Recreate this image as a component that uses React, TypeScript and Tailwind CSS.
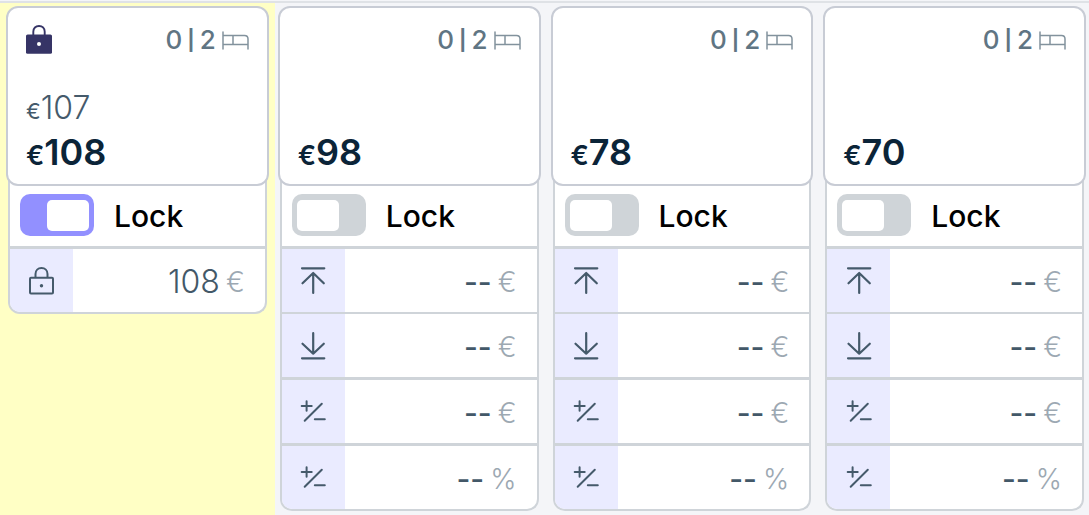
import { useId, useState } from "react";
import type { ReactNode } from "react";

type Night = {
  price: number;
  previousPrice?: number;
  locked: boolean;
  spacing: string;
};

const nights: Night[] = [
  { price: 108, previousPrice: 107, locked: true, spacing: "bg-[#ffffc5] px-1.5" },
  { price: 98, locked: false, spacing: "pl-[3px] pr-1.5" },
  { price: 78, locked: false, spacing: "pl-1 pr-1.5" },
  { price: 70, locked: false, spacing: "pl-1 pr-[3px]" },
];

function SolidLock() {
  return (
    <svg className="h-[30px] w-[26px]" viewBox="0 0 26 30" fill="none" aria-hidden="true">
      <path d="M7.300 11V6.800C7.300 3.200 9.700 1 13 1S18.700 3.200 18.700 6.800V11" stroke="#363466" strokeWidth="1.900" />
      <rect x="0" y="9.500" width="26" height="19.300" rx="1.600" fill="#363466" />
      <circle cx="13" cy="19" r="2" fill="#fff" />
    </svg>
  );
}

function OutlineLock() {
  return (
    <svg className="h-7 w-[26px]" viewBox="0 0 26 28" fill="none" stroke="#455a6b" strokeWidth="2" aria-hidden="true">
      <rect x="1" y="10.800" width="23" height="15.800" rx="1" />
      <path d="M6.500 10.800V7C6.500 3.300 9 1 12.500 1S18.500 3.300 18.500 7V10.800" />
      <circle cx="12.500" cy="18.700" r="1.700" fill="#455a6b" stroke="none" />
    </svg>
  );
}

function Bed() {
  return (
    <svg className="h-[19px] w-[27px]" viewBox="0 0 27 19" fill="none" stroke="#82929d" strokeWidth="1.500" strokeLinecap="round" aria-hidden="true">
      <path d="M1 1V18M1 4.500H22.500Q26 4.500 26 8V18M1 13.500H26M11 4.500V13.500" />
    </svg>
  );
}

function MaxIcon() {
  return (
    <svg className="size-7" viewBox="0 0 28 28" fill="none" stroke="#455a6b" strokeWidth="2.200" strokeLinecap="round" strokeLinejoin="round" aria-hidden="true">
      <path d="M3 1.300H25.300M14.200 6V26M3.500 16.300L14.200 6L24.800 16.300" />
    </svg>
  );
}

function MinIcon() {
  return (
    <svg className="size-7" viewBox="0 0 28 28" fill="none" stroke="#455a6b" strokeWidth="2.200" strokeLinecap="round" strokeLinejoin="round" aria-hidden="true">
      <path d="M3 26.300H25.300M14.200 1.200V21.700M3.500 11.700L14.200 21.700L24.800 11.700" />
    </svg>
  );
}

function PlusMinus() {
  return (
    <svg className="size-7" viewBox="0 0 28 28" fill="none" stroke="#455a6b" strokeWidth="2" strokeLinecap="round" aria-hidden="true">
      <path d="M2.700 8H12.700M7.600 3.200V12.800M5.700 22.800L22.800 5.700M15.800 21.300H25.800" />
    </svg>
  );
}

function Field({ label, icon, initial, unit }: { label: string; icon: ReactNode; initial: string; unit: string }) {
  const id = useId();
  const [value, setValue] = useState(initial);
  const weight = value === "--" ? "text-3xl font-medium" : "text-[32px] font-light";
  return (
    <div className="flex h-[63px] bg-white">
      <label htmlFor={id} aria-label={label} className="flex w-[63px] shrink-0 items-center justify-center bg-[#eaebff]">
        {icon}
      </label>
      <div className="flex min-w-0 flex-1 items-center gap-1.5 pt-0.5 pr-5">
        <input
          id={id}
          value={value}
          onChange={(e) => setValue(e.target.value)}
          className={`h-10 w-full min-w-0 flex-1 bg-transparent text-right text-[#435868] outline-none ${weight}`}
        />
        <span className="text-[28px] leading-10 font-light text-[#9ca8b2]">{unit}</span>
      </div>
    </div>
  );
}

function NightColumn({ night }: { night: Night }) {
  const id = useId();
  const [locked, setLocked] = useState(night.locked);
  return (
    <section className={`min-w-0 flex-1 pt-[3px] ${night.spacing}`}>
      <div className="relative z-10 flex h-[180px] flex-col justify-between rounded-xl border-2 border-[#c8ccd5] bg-white px-[18px] pt-4 pb-[11px]">
        <div className="flex h-8 items-center justify-between">
          {locked ? <SolidLock /> : <span />}
          <div className="flex items-center gap-1.5 text-[26px] leading-8 font-medium text-[#607583]">
            <span className="flex items-center gap-[5px]">
              <span>0</span>
              <span className="text-xl font-bold">|</span>
              <span>2</span>
            </span>
            <Bed />
          </div>
        </div>
        <div>
          {night.previousPrice !== undefined && (
            <p className="text-[32px] leading-[46px] font-light text-[#455a6b]">
              <span className="text-[22px] leading-none font-normal">€</span>
              {night.previousPrice}
            </p>
          )}
          <p className="text-4xl leading-[42px] font-semibold text-[#0b2438]">
            <span className="text-[27px] leading-none">€</span>
            {night.price}
          </p>
        </div>
      </div>
      <div className="mx-0.5 -mt-3 overflow-hidden rounded-b-xl border-2 border-t-0 border-[#cfd4d9] bg-[#cfd4d9]">
        <div className="flex h-[72px] items-center gap-5 bg-white pt-2.5 pl-2.5">
          <input
            id={id}
            type="checkbox"
            role="switch"
            checked={locked}
            onChange={(e) => setLocked(e.target.checked)}
            className="flex h-[42px] w-[74px] appearance-none items-center rounded-[10px] bg-[#cfd4d8] px-[5px] before:h-[31px] before:w-[42px] before:rounded-[5px] before:bg-white checked:justify-end checked:bg-[#9290ff]"
          />
          <label htmlFor={id} className="pt-0.5 text-3xl font-medium text-black">
            Lock
          </label>
        </div>
        <div className="pt-[3px]">
          {locked ? (
            <Field label="Locked price" icon={<OutlineLock />} initial={String(night.price)} unit="€" />
          ) : (
            <div className="flex flex-col gap-[3px]">
              <div className="flex flex-col gap-0.5">
                <Field label="Maximum price" icon={<MaxIcon />} initial="--" unit="€" />
                <Field label="Minimum price" icon={<MinIcon />} initial="--" unit="€" />
              </div>
              <Field label="Adjust by amount" icon={<PlusMinus />} initial="--" unit="€" />
              <Field label="Adjust by percentage" icon={<PlusMinus />} initial="--" unit="%" />
            </div>
          )}
        </div>
      </div>
    </section>
  );
}

export default function App() {
  return (
    <main className="flex min-h-screen flex-col bg-[#f4f5f8] pt-px font-['Inter','Liberation_Sans',sans-serif]">
      <div className="h-0.5 bg-[#dfe2e6]" />
      <div className="flex flex-1">
        {nights.map((night) => (
          <NightColumn key={night.price} night={night} />
        ))}
      </div>
    </main>
  );
}
